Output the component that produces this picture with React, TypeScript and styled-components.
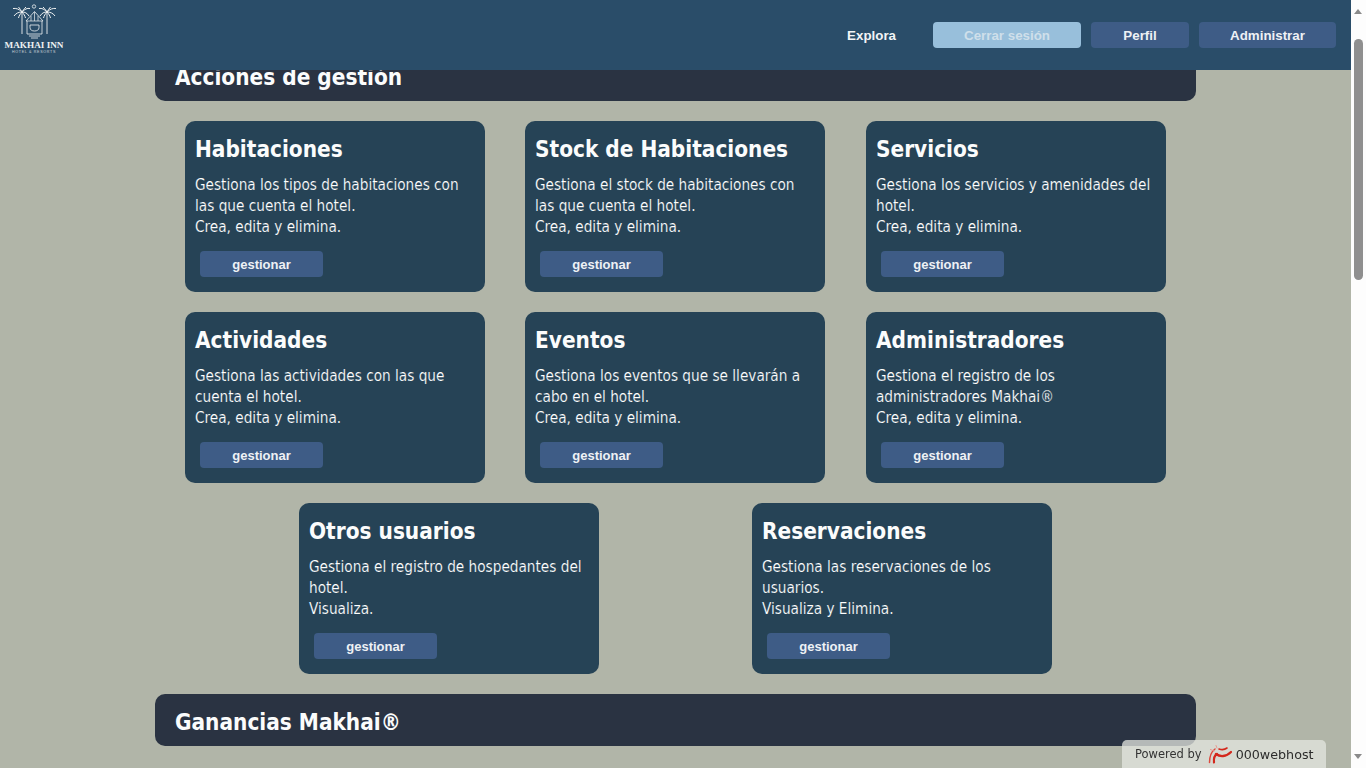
import React from "react";
import styled, { createGlobalStyle } from "styled-components";

const Global = createGlobalStyle`
  html, body { margin: 0; padding: 0; height: 100%; overflow: hidden; background: #b1b5a8; }
  * { box-sizing: border-box; }
`;

const Page = styled.div`
  width: 1351px;
  height: 768px;
  overflow: hidden;
  padding-top: 49px;
  font-family: "DejaVu Sans Condensed", "DejaVu Sans", sans-serif;
  background: #b1b5a8;
`;

const Header = styled.header`
  position: fixed;
  top: 0;
  left: 0;
  width: 1351px;
  height: 70px;
  z-index: 5;
  display: flex;
  align-items: center;
  justify-content: space-between;
  padding: 0 15px 0 5px;
  background: #2a4d69;
`;

const Logo = styled.div`
  width: 58px;
  height: 54px;
  margin-top: -8px;
  display: flex;
  flex-direction: column;
  align-items: center;
  color: #eef1f2;
`;

const LogoName = styled.span`
  font: 700 9.2px/9px "Liberation Serif", serif;
  white-space: nowrap;
  margin-top: 1px;
`;

const LogoSub = styled.span`
  font: 400 3.6px/4px "Liberation Sans", sans-serif;
  letter-spacing: 0.7px;
  white-space: nowrap;
  opacity: 0.8;
`;

const Nav = styled.nav`
  display: flex;
  align-items: center;
  gap: 10px;
`;

const NavLink = styled.a`
  padding-top: 2px;
  font: 700 13.33px/26px "Liberation Sans", sans-serif;
  color: #f2f4f6;
  margin-right: 27px;
`;

const NavButton = styled.button<{ $w: number; $active?: boolean }>`
  width: ${(p) => p.$w}px;
  height: 26px;
  border: 0;
  border-radius: 4px;
  padding: 2px 0 0;
  font: 700 13.33px/24px "Liberation Sans", sans-serif;
  background: ${(p) => (p.$active ? "#98bfdb" : "#3e5c86")};
  color: ${(p) => (p.$active ? "#cfdfea" : "#eef1f5")};
`;

const Bar = styled.div`
  width: 1041px;
  height: 52px;
  margin: 0 auto;
  padding: 3px 20px 0;
  display: flex;
  align-items: center;
  border-radius: 10px;
  background: #2a3342;
  color: #fbfcfc;
  font-size: 22.4px;
  font-weight: 700;
`;

const Row = styled.div<{ $columns: string }>`
  width: 981px;
  margin: 20px auto 0;
  display: grid;
  grid-template-columns: ${(p) => p.$columns};
  justify-content: center;
`;

const Card = styled.article`
  width: 300px;
  height: 171px;
  padding: 11px 10px 0;
  border-radius: 10px;
  background: #264356;
  color: #ffffff;
`;

const CardTitle = styled.h3`
  margin: 0 0 8px;
  height: 35px;
  font-size: 22.4px;
  line-height: 35px;
  font-weight: 700;
  color: #fbfcfc;
`;

const CardText = styled.p`
  margin: 0 0 13px;
  font-size: 15.2px;
  line-height: 21px;
  font-weight: 400;
  height: 63px;
  -webkit-text-stroke: 0.15px #264356;
`;

const Manage = styled.button`
  display: block;
  width: 123px;
  height: 26px;
  margin-left: 5px;
  border: 0;
  border-radius: 4px;
  padding: 1px 0 0;
  font: 700 13px/25px "Liberation Sans", sans-serif;
  background: #3e5c86;
  color: #eef1f5;
`;

const Footer = styled(Bar)`
  margin-top: 20px;
`;

const Badge = styled.div`
  position: fixed;
  left: 1122px;
  top: 740px;
  width: 204px;
  height: 28px;
  z-index: 6;
  display: flex;
  align-items: center;
  padding: 0 0 0 13px;
  border-radius: 5px 5px 0 0;
  background: rgba(228, 231, 224, 0.75);
  color: #333;
  font-family: "DejaVu Sans", sans-serif;
  font-size: 11.5px;
`;

const BadgeName = styled.span`
  font-size: 12.7px;
  margin-left: 4px;
  color: #2b2b2b;
`;

const BadgeIcon = styled.svg`
  margin-left: 6px;
`;

const Scrollbar = styled.div`
  position: fixed;
  top: 0;
  right: 0;
  width: 15px;
  height: 768px;
  background: #fdfdfd;
  z-index: 7;
`;

const ArrowUp = styled.div`
  position: absolute;
  top: 9px;
  left: 3px;
  border-left: 4.5px solid transparent;
  border-right: 4.5px solid transparent;
  border-bottom: 5px solid #8a8a8a;
`;

const ArrowDown = styled.div`
  position: absolute;
  bottom: 9px;
  left: 3px;
  border-left: 4.5px solid transparent;
  border-right: 4.5px solid transparent;
  border-top: 5px solid #8a8a8a;
`;

const Thumb = styled.div`
  position: absolute;
  top: 39px;
  left: 3px;
  width: 9px;
  height: 241px;
  border-radius: 5px;
  background: #8f8f8f;
`;

const LogoMark = () => (
  <svg width="46" height="36" viewBox="0 0 46 36" fill="none" stroke="#eef1f2" strokeWidth="0.8">
    <circle cx="23" cy="2.500" r="1.700" />
    <path d="M11 8v22M36 8v22" strokeWidth="0.900" />
    <path d="M11 8C8 5 5 4 2 4.500M11 8C8 8 5 9 3 12M11 8C9 10 8 12 7.500 14M11 8c3-3 5-4 8-3.500M11 8c3 0 5 1 7 4M11 8c2 2 3 4 3.500 6M11 8c-1-2-2-3-3.500-5M11 8c1-2 2-3 4-5" strokeWidth="1" />
    <path d="M36 8c-3-3-5-4-8-3.500M36 8c-3 0-5 1-7 4M36 8c-2 2-3 4-3.500 6M36 8c3-3 6-4 9-3.500M36 8c3 0 6 1 8 4M36 8c2 2 3 4 3.500 6M36 8c-1-2-2-3-4-5M36 8c1-2 2-3 3.500-5" strokeWidth="1" />
    <path d="M15 17l8.500-9.500L32 17M16 17v13h15V17" />
    <path d="M20 12v5M23.500 8v9M27 12v5M15 17h17" strokeWidth="0.700" />
    <path d="M19 21h9v2.500c0 2.500-2 3.500-4.500 3.500S19 26 19 23.500z" stroke="#eef1f2" />
    <path d="M18 32h11M20 34h7" />
  </svg>
);

const Swirl = () => (
  <BadgeIcon width="24" height="20" viewBox="0 0 24 20" fill="none" stroke="#d3281c" strokeLinecap="round">
    <path d="M7 5C3 8 1.500 13 1.500 18.500" strokeWidth="1.500" stroke="#dd4a3e" />
    <path d="M9 10c-2.500 1.500-3.500 4.500-3 8.500" strokeWidth="2.200" />
    <path d="M8 10c4 3 10 3 15-2" strokeWidth="2.300" />
    <path d="M11 5c3 1 6 .5 8-1" strokeWidth="1.600" />
    <path d="M6 7L2.500 5.500M9 4L8 1.500" strokeWidth="1" stroke="#e9958e" />
  </BadgeIcon>
);

type Item = { title: string; lines: string[] };

const rows: Item[][] = [
  [
    { title: "Habitaciones", lines: ["Gestiona los tipos de habitaciones con las que cuenta el hotel.", "Crea, edita y elimina."] },
    { title: "Stock de Habitaciones", lines: ["Gestiona el stock de habitaciones con las que cuenta el hotel.", "Crea, edita y elimina."] },
    { title: "Servicios", lines: ["Gestiona los servicios y amenidades del hotel.", "Crea, edita y elimina."] },
  ],
  [
    { title: "Actividades", lines: ["Gestiona las actividades con las que cuenta el hotel.", "Crea, edita y elimina."] },
    { title: "Eventos", lines: ["Gestiona los eventos que se llevarán a cabo en el hotel.", "Crea, edita y elimina."] },
    { title: "Administradores", lines: ["Gestiona el registro de los administradores Makhai®", "Crea, edita y elimina."] },
  ],
  [
    { title: "Otros usuarios", lines: ["Gestiona el registro de hospedantes del hotel.", "Visualiza."] },
    { title: "Reservaciones", lines: ["Gestiona las reservaciones de los usuarios.", "Visualiza y Elimina."] },
  ],
];

export default function App() {
  return (
    <>
      <Global />
      <Header>
        <Logo>
          <LogoMark />
          <LogoName>MAKHAI INN</LogoName>
          <LogoSub>HOTEL &amp; RESORTS</LogoSub>
        </Logo>
        <Nav>
          <NavLink>Explora</NavLink>
          <NavButton $w={148} $active>Cerrar sesión</NavButton>
          <NavButton $w={98}>Perfil</NavButton>
          <NavButton $w={137}>Administrar</NavButton>
        </Nav>
      </Header>
      <Page>
        <Bar>Acciones de gestión</Bar>
        {rows.map((row, i) => (
          <Row key={i} $columns={row.length === 2 ? "453px 300px" : "340px 341px 300px"}>
            {row.map((c) => (
              <Card key={c.title}>
                <CardTitle>{c.title}</CardTitle>
                <CardText>
                  {c.lines[0]}
                  <br />
                  {c.lines[1]}
                </CardText>
                <Manage>gestionar</Manage>
              </Card>
            ))}
          </Row>
        ))}
        <Footer>Ganancias Makhai®</Footer>
      </Page>
      <Badge>
        Powered by
        <Swirl />
        <BadgeName>000webhost</BadgeName>
      </Badge>
      <Scrollbar>
        <ArrowUp />
        <Thumb />
        <ArrowDown />
      </Scrollbar>
    </>
  );
}
